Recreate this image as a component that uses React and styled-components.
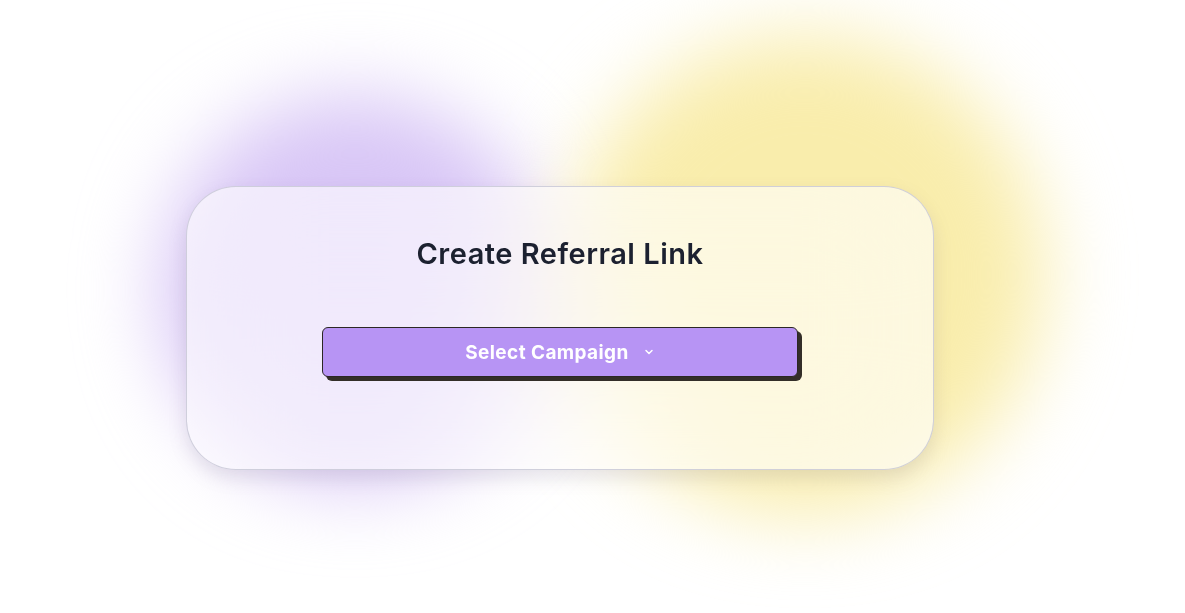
import React from "react";
import styled, { createGlobalStyle } from "styled-components";

const Global = createGlobalStyle`
  html, body { margin: 0; padding: 0; background: #ffffff; }
  body { font-family: Inter, "Noto Sans", sans-serif; }
  #root { width: 1185px; height: 613px; }
`;

const Page = styled.div`
  position: relative;
  width: 1185px;
  height: 613px;
  overflow: hidden;
  background: #ffffff;
  display: flex;
  align-items: flex-start;
  justify-content: flex-start;
  padding: 186px 0 0 186px;
  box-sizing: border-box;
`;

const Blob = styled.div`
  position: absolute;
  left: ${(p) => p.$x}px;
  top: ${(p) => p.$y}px;
  width: ${(p) => p.$size}px;
  height: ${(p) => p.$size}px;
  border-radius: 50%;
  background: ${(p) => p.$color};
  filter: blur(${(p) => p.$blur}px);
`;

const Card = styled.section`
  position: relative;
  z-index: 1;
  width: 748px;
  height: 284px;
  box-sizing: border-box;
  border-radius: 50px;
  border: 1px solid rgba(200, 200, 214, 0.85);
  background: rgba(255, 255, 255, 0.62);
  backdrop-filter: blur(60px);
  box-shadow: 0 8px 18px rgba(120, 110, 140, 0.18);
  display: flex;
  flex-direction: column;
  align-items: center;
  padding-top: 49px;
`;

const Title = styled.h1`
  margin: 0;
  font-family: Inter, "Noto Sans", sans-serif;
  font-weight: 600;
  font-size: 29px;
  line-height: 36px;
  color: #1c2130;
  letter-spacing: 0.5px;
`;

const SelectButton = styled.button`
  margin-top: 55px;
  width: 476px;
  height: 50px;
  box-sizing: border-box;
  border: 1px solid #2b2724;
  border-radius: 6px;
  background: #b794f4;
  box-shadow: 4px 4px 0 #332e28;
  color: #ffffff;
  font-family: Inter, "Noto Sans", sans-serif;
  font-weight: 700;
  font-size: 19px;
  letter-spacing: 0.4px;
  display: flex;
  align-items: center;
  justify-content: center;
  gap: 14px;
  cursor: pointer;
`;

const Chevron = () => (
  <svg width="12" height="12" viewBox="0 0 24 24" fill="none" stroke="#fff" strokeWidth="3" strokeLinecap="round" strokeLinejoin="round">
    <path d="M6 9l6 6 6-6" />
  </svg>
);

export default function App() {
  return (
    <>
      <Global />
      <Page>
        <Blob $x={160} $y={95} $size={390} $color="#d8c6f6" $blur={40} />
        <Blob $x={565} $y={35} $size={480} $color="#f9edac" $blur={40} />
        <Card>
          <Title>Create Referral Link</Title>
          <SelectButton>
            Select Campaign <Chevron />
          </SelectButton>
        </Card>
      </Page>
    </>
  );
}
